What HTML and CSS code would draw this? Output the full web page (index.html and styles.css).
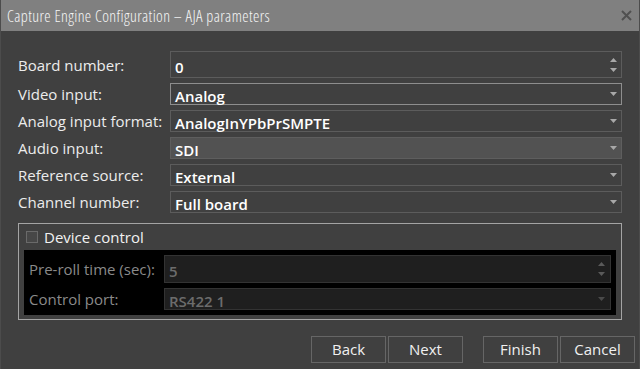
FILE: index.html
```html
<!DOCTYPE html>
<html>
<head>
<meta charset="utf-8">
<link rel="stylesheet" href="styles.css">
</head>
<body>
<div class="window">
  <div class="titlebar">
    <span class="title">Capture Engine Configuration – AJA parameters</span>
    <svg class="close" width="11" height="11" viewBox="0 0 11 11"><path d="M1 1L10 10M10 1L1 10" stroke="#505050" stroke-width="2"/></svg>
  </div>
  <div class="content">
    <div class="form">
      <div class="label">Board number:</div>
      <div class="field spin tall"><span class="value">0</span>
        <span class="spinner">
          <svg width="7" height="4" viewBox="0 0 7 4"><path d="M3.5 0L7 4H0Z" fill="#a8a8a8"/></svg>
          <svg width="7" height="4" viewBox="0 0 7 4"><path d="M0 0H7L3.5 4Z" fill="#a8a8a8"/></svg>
        </span>
      </div>
      <div class="label">Video input:</div>
      <div class="field focused"><span class="value">Analog</span><svg class="arrow" width="7" height="4" viewBox="0 0 7 4"><path d="M0 0H7L3.5 4Z" fill="#a8a8a8"/></svg></div>
      <div class="label">Analog input format:</div>
      <div class="field"><span class="value">AnalogInYPbPrSMPTE</span><svg class="arrow" width="7" height="4" viewBox="0 0 7 4"><path d="M0 0H7L3.5 4Z" fill="#a8a8a8"/></svg></div>
      <div class="label">Audio input:</div>
      <div class="field hover"><span class="value">SDI</span><svg class="arrow" width="7" height="4" viewBox="0 0 7 4"><path d="M0 0H7L3.5 4Z" fill="#a8a8a8"/></svg></div>
      <div class="label">Reference source:</div>
      <div class="field"><span class="value">External</span><svg class="arrow" width="7" height="4" viewBox="0 0 7 4"><path d="M0 0H7L3.5 4Z" fill="#a8a8a8"/></svg></div>
      <div class="label">Channel number:</div>
      <div class="field"><span class="value">Full board</span><svg class="arrow" width="7" height="4" viewBox="0 0 7 4"><path d="M0 0H7L3.5 4Z" fill="#a8a8a8"/></svg></div>
    </div>
    <div class="group">
      <div class="check"><span class="box"></span><span>Device control</span></div>
      <div class="panel">
        <div class="label dim">Pre-roll time (sec):</div>
        <div class="field disabled tall2"><span class="value">5</span>
          <span class="spinner">
            <svg width="7" height="4" viewBox="0 0 7 4"><path d="M3.5 0L7 4H0Z" fill="#5a5a5a"/></svg>
            <svg width="7" height="4" viewBox="0 0 7 4"><path d="M0 0H7L3.5 4Z" fill="#5a5a5a"/></svg>
          </span>
        </div>
        <div class="label dim">Control port:</div>
        <div class="field disabled"><span class="value">RS422 1</span><svg class="arrow" width="7" height="4" viewBox="0 0 7 4"><path d="M0 0H7L3.5 4Z" fill="#4a4a4a"/></svg></div>
      </div>
    </div>
  </div>
  <div class="buttons">
    <button class="btn">Back</button>
    <button class="btn">Next</button>
    <button class="btn sep">Finish</button>
    <button class="btn">Cancel</button>
  </div>
</div>
</body>
</html>
```
FILE: styles.css
```css
html, body {
  margin: 0;
  padding: 0;
  background: #404040;
}
body {
  font-family: "Open Sans", "Noto Sans", sans-serif;
  font-size: 15px;
  color: #ececec;
}
.window {
  width: 640px;
  height: 369px;
  box-sizing: border-box;
  background: #404040;
  border-left: 1px solid #4c4c4c;
  border-right: 1px solid #4c4c4c;
  display: flex;
  flex-direction: column;
  overflow: hidden;
}
.titlebar {
  height: 31px;
  margin: 0 -1px;
  background: #808080;
  display: flex;
  align-items: center;
  justify-content: space-between;
  padding: 0 8px 0 7px;
}
.title {
  font-family: "Open Sans", sans-serif;
  font-weight: 300;
  font-stretch: 75%;
  font-size: 16px;
  letter-spacing: 0.4px;
  color: #f6f6f6;
  line-height: 20px;
}
.close {
  display: block;
}
.content {
  padding: 20px 17px 0 17px;
}
.form {
  display: grid;
  grid-template-columns: 152px 1fr;
  row-gap: 5px;
  align-items: center;
}
.label {
  line-height: 20px;
  white-space: nowrap;
}
.field {
  height: 22px;
  box-sizing: border-box;
  border: 1px solid #5c5c5c;
  background: #404040;
  display: flex;
  align-items: center;
  padding: 0 4px 0 4px;
}
.field .value {
  padding-top: 3px;
}
.field.tall {
  height: 27px;
}
.field.tall .value {
  padding-top: 4px;
}
.field.focused {
  border-color: #8e8e8e;
}
.field.hover {
  background: #525252;
  border-color: #5e5e5e;
}
.value {
  flex: 1;
  font-weight: 600;
  color: #ffffff;
  line-height: 20px;
  white-space: nowrap;
}
.arrow {
  display: block;
}
.spinner {
  display: flex;
  flex-direction: column;
  gap: 6px;
}
.spinner svg {
  display: block;
}
.group {
  margin-top: 10px;
  border: 1px solid #a4a4a4;
  padding: 0 5px 4px 5px;
}
.check {
  height: 26px;
  display: flex;
  align-items: center;
  gap: 6px;
  padding-left: 2px;
  color: #f2f2f2;
}
.box {
  width: 10px;
  height: 10px;
  border: 1px solid #6a6a6a;
  background: #474747;
}
.panel {
  background: #000000;
  padding: 5px;
  display: grid;
  grid-template-columns: 135px 1fr;
  row-gap: 5px;
  align-items: center;
}
.label.dim {
  color: #8a8a8a;
}
.field.disabled {
  background: #1f1f1f;
  border-color: #333333;
  padding-right: 5px;
}
.field.tall2 {
  height: 28px;
}
.field.tall2 .value {
  padding-top: 4px;
}
.field.disabled .value {
  color: #6c6c6c;
}
.buttons {
  display: flex;
  justify-content: flex-end;
  gap: 2px;
  padding: 16px 4px 0 0;
}
.btn {
  width: 75px;
  height: 27px;
  box-sizing: border-box;
  border: 1px solid #666666;
  background: #404040;
  color: #f0f0f0;
  font-family: "Open Sans", "Noto Sans", sans-serif;
  font-size: 15px;
  padding: 0;
  line-height: 25px;
}
.btn.sep {
  margin-left: 18px;
}
```
